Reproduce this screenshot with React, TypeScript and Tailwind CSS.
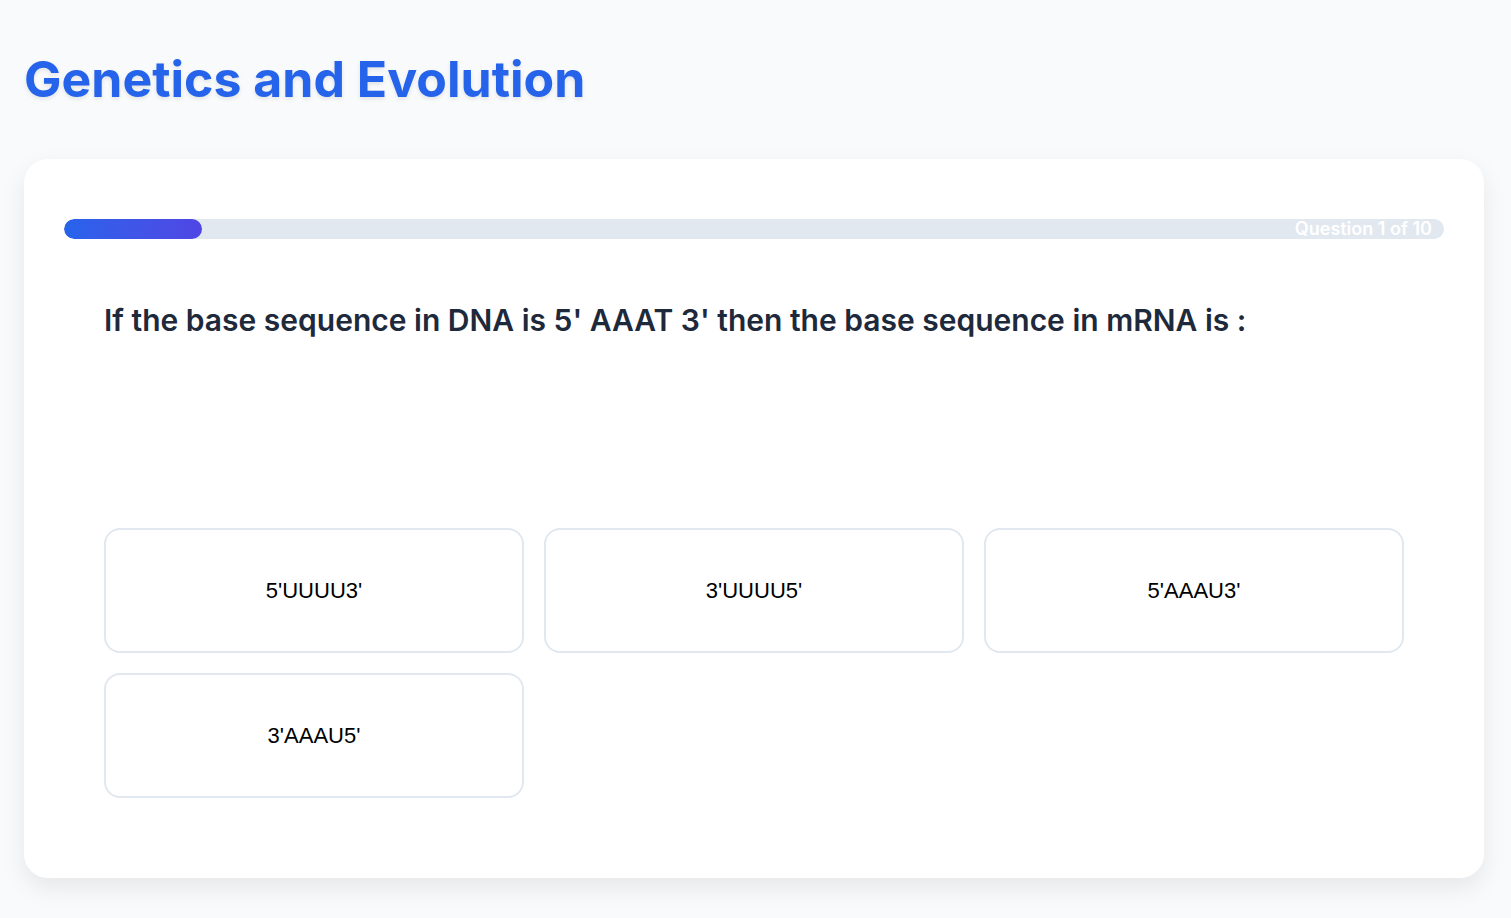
import React from 'react';

const options = ["5'UUUU3'", "3'UUUU5'", "5'AAAU3'", "3'AAAU5'"];

export default function App() {
  const current = 1;
  const total = 10;
  const pct = (current / total) * 100;

  return (
    <div className="min-h-screen bg-[#f8fafc] px-6 pt-[54px] pb-10" style={{ fontFamily: 'Inter, "Noto Sans", sans-serif' }}>
      <h1 className="text-[50px] leading-none font-bold text-[#2563eb] [text-shadow:0_2px_4px_rgba(0,0,0,0.1)]">
        Genetics and Evolution
      </h1>

      <div className="mt-[55px] w-[1460px] bg-white rounded-3xl shadow-[0_10px_25px_rgba(0,0,0,0.08)] px-10 pt-[60px] pb-[80px]">
        {/* progress */}
        <div className="relative h-5 rounded-full bg-[#e2e8f0] overflow-hidden">
          <div
            className="h-full rounded-full bg-gradient-to-r from-[#2563eb] to-[#4f46e5]"
            style={{ width: `${pct}%` }}
          />
          <span className="absolute right-3 top-1/2 -translate-y-1/2 text-lg font-semibold text-white leading-none">
            Question {current} of {total}
          </span>
        </div>

        <div className="px-10">
          <h2 className="mt-[60px] text-[30px] leading-[42px] font-semibold text-[#1e293b]">
            If the base sequence in DNA is 5' AAAT 3' then the base sequence in mRNA is :
          </h2>

          <div className="mt-[187px] grid grid-cols-3 gap-5">
            {options.map((o) => (
              <button
                key={o}
                className="h-[125px] rounded-2xl border-2 border-[#e2e8f0] bg-white flex items-center justify-center text-[22px] text-black"
                style={{ fontFamily: '"Liberation Sans", Arial, sans-serif' }}
              >
                {o}
              </button>
            ))}
          </div>
        </div>
      </div>
    </div>
  );
}
